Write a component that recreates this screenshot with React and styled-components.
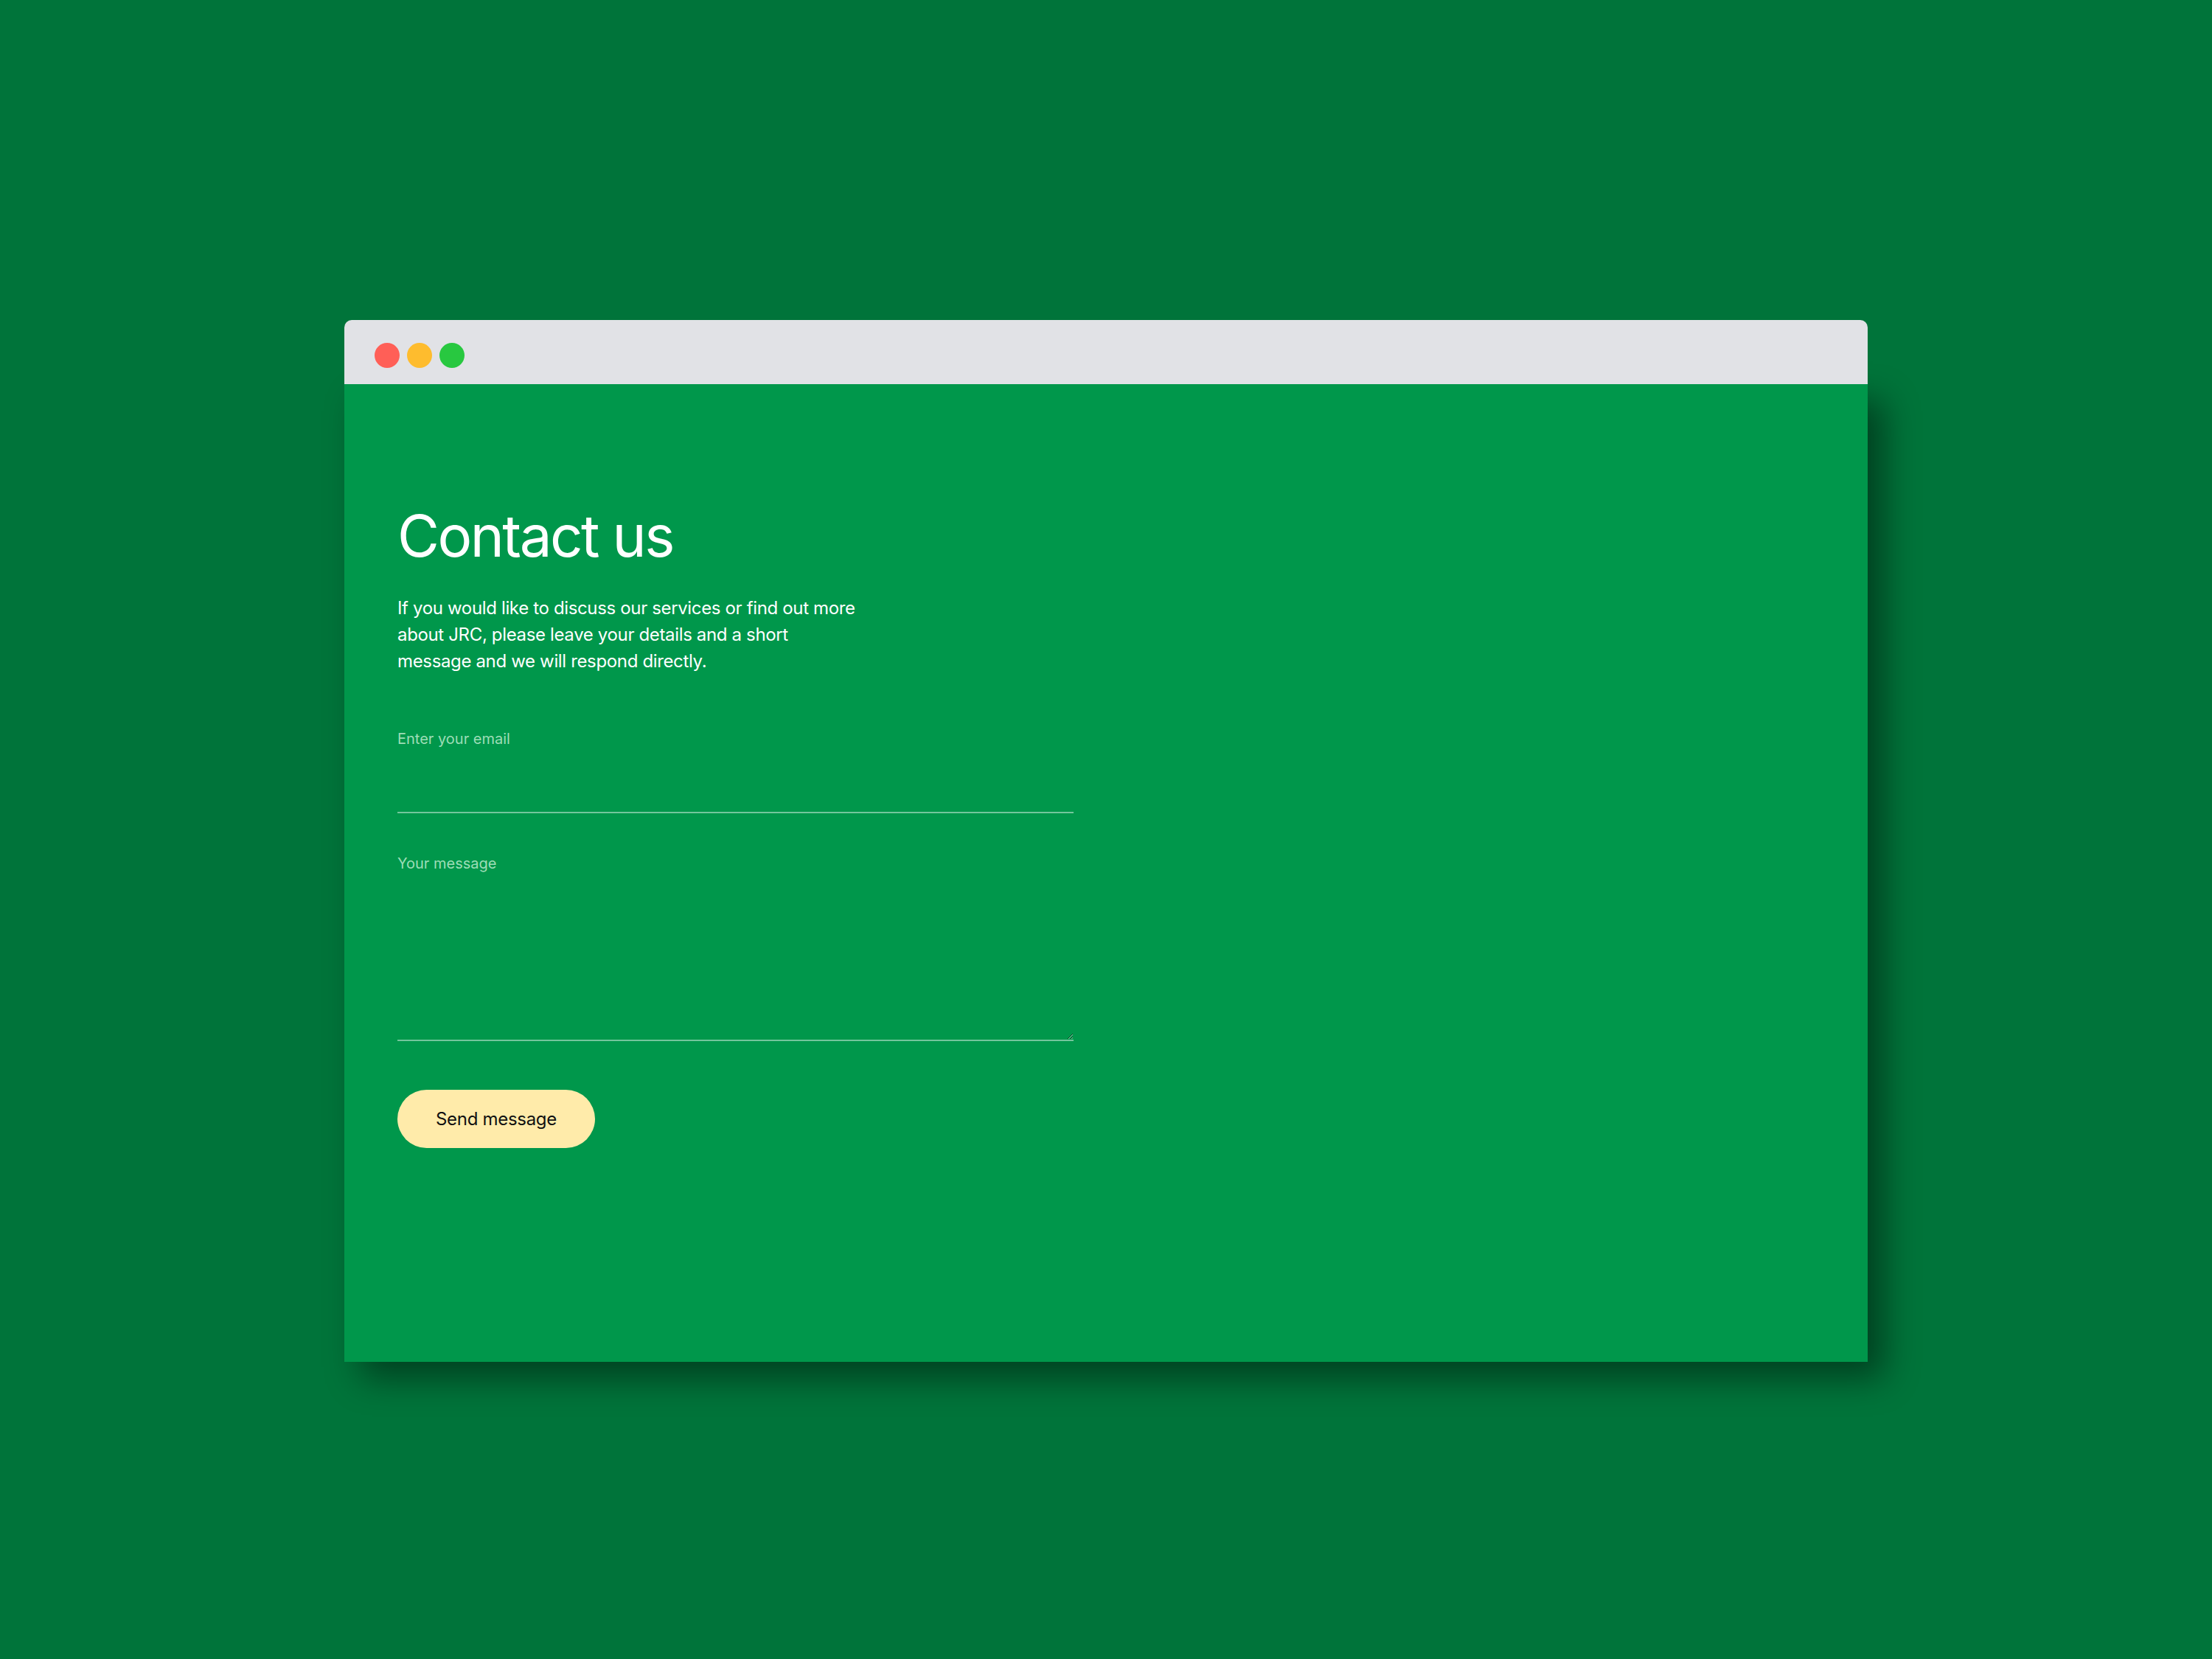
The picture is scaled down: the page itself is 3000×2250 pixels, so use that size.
import React, { useState } from 'react';
import styled, { createGlobalStyle } from 'styled-components';

const GlobalStyle = createGlobalStyle`
  html, body {
    margin: 0;
    padding: 0;
    background: #00743a;
  }
  body {
    font-family: 'Inter', 'Liberation Sans', sans-serif;
  }
`;

const Page = styled.div`
  width: 3000px;
  height: 2250px;
  box-sizing: border-box;
  padding-top: 434px;
  display: flex;
  justify-content: center;
  align-items: flex-start;
  background: #00743a;
`;

const Window = styled.div`
  width: 2066px;
  display: flex;
  flex-direction: column;
`;

const TitleBar = styled.div`
  position: relative;
  z-index: 1;
  height: 87px;
  background: #e1e2e6;
  border-radius: 10px 10px 0 0;
  display: flex;
  align-items: center;
  gap: 10px;
  padding: 9px 0 0 41px;
  box-sizing: border-box;
`;

const Dot = styled.span`
  width: 34px;
  height: 34px;
  border-radius: 50%;
  background: ${(p) => p.$color};
`;

const Content = styled.main`
  height: 1326px;
  box-sizing: border-box;
  background: #00974b;
  box-shadow: 22px 22px 44px rgba(0, 0, 0, 0.45);
  padding: 158px 72px 0;
  color: #ffffff;
`;

const Heading = styled.h1`
  margin: 0;
  font-size: 78px;
  font-weight: 400;
  letter-spacing: -2.5px;
  line-height: normal;
`;

const Intro = styled.p`
  margin: 33px 0 0;
  max-width: 630px;
  font-size: 24px;
  line-height: 36px;
  letter-spacing: -0.35px;
`;

const Form = styled.form`
  margin-top: 72px;
  width: 917px;
  display: flex;
  flex-direction: column;
`;

const Field = styled.label`
  display: flex;
  flex-direction: column;
  gap: 8px;
  margin-bottom: ${(p) => p.$gap || '0'};
`;

const LabelText = styled.span`
  font-size: 20px;
  line-height: 30px;
  color: rgba(210, 245, 220, 0.75);
`;

const fieldBase = `
  width: 100%;
  box-sizing: border-box;
  background: transparent;
  border: none;
  border-bottom: 2px solid rgba(255, 255, 255, 0.45);
  color: #ffffff;
  font-family: 'Inter', 'Liberation Sans', sans-serif;
  font-size: 24px;
  outline: none;
  padding: 0;
`;

const Input = styled.input`
  ${fieldBase}
  height: 78px;
`;

const TextArea = styled.textarea`
  ${fieldBase}
  height: 218px;
  resize: vertical;
`;

const SendButton = styled.button`
  align-self: flex-start;
  height: 79px;
  padding: 0 52px;
  border: none;
  border-radius: 40px;
  background: #ffebaa;
  color: #111111;
  font-family: 'Inter', 'Liberation Sans', sans-serif;
  font-size: 24px;
  letter-spacing: -0.3px;
  cursor: pointer;
`;

const App = () => {
  const [email, setEmail] = useState('');
  const [message, setMessage] = useState('');

  return (
    <>
      <GlobalStyle />
      <Page>
        <Window>
          <TitleBar>
            <Dot $color="#ff5f57" />
            <Dot $color="#febc2e" />
            <Dot $color="#28c840" />
          </TitleBar>
          <Content>
            <Heading>Contact us</Heading>
            <Intro>
              If you would like to discuss our services or find out more about JRC, please leave
              your details and a short message and we will respond directly.
            </Intro>
            <Form onSubmit={(e) => e.preventDefault()}>
              <Field $gap="53px">
                <LabelText>Enter your email</LabelText>
                <Input type="email" value={email} onChange={(e) => setEmail(e.target.value)} />
              </Field>
              <Field $gap="66px">
                <LabelText>Your message</LabelText>
                <TextArea value={message} onChange={(e) => setMessage(e.target.value)} />
              </Field>
              <SendButton type="submit">Send message</SendButton>
            </Form>
          </Content>
        </Window>
      </Page>
    </>
  );
};

export default App;
